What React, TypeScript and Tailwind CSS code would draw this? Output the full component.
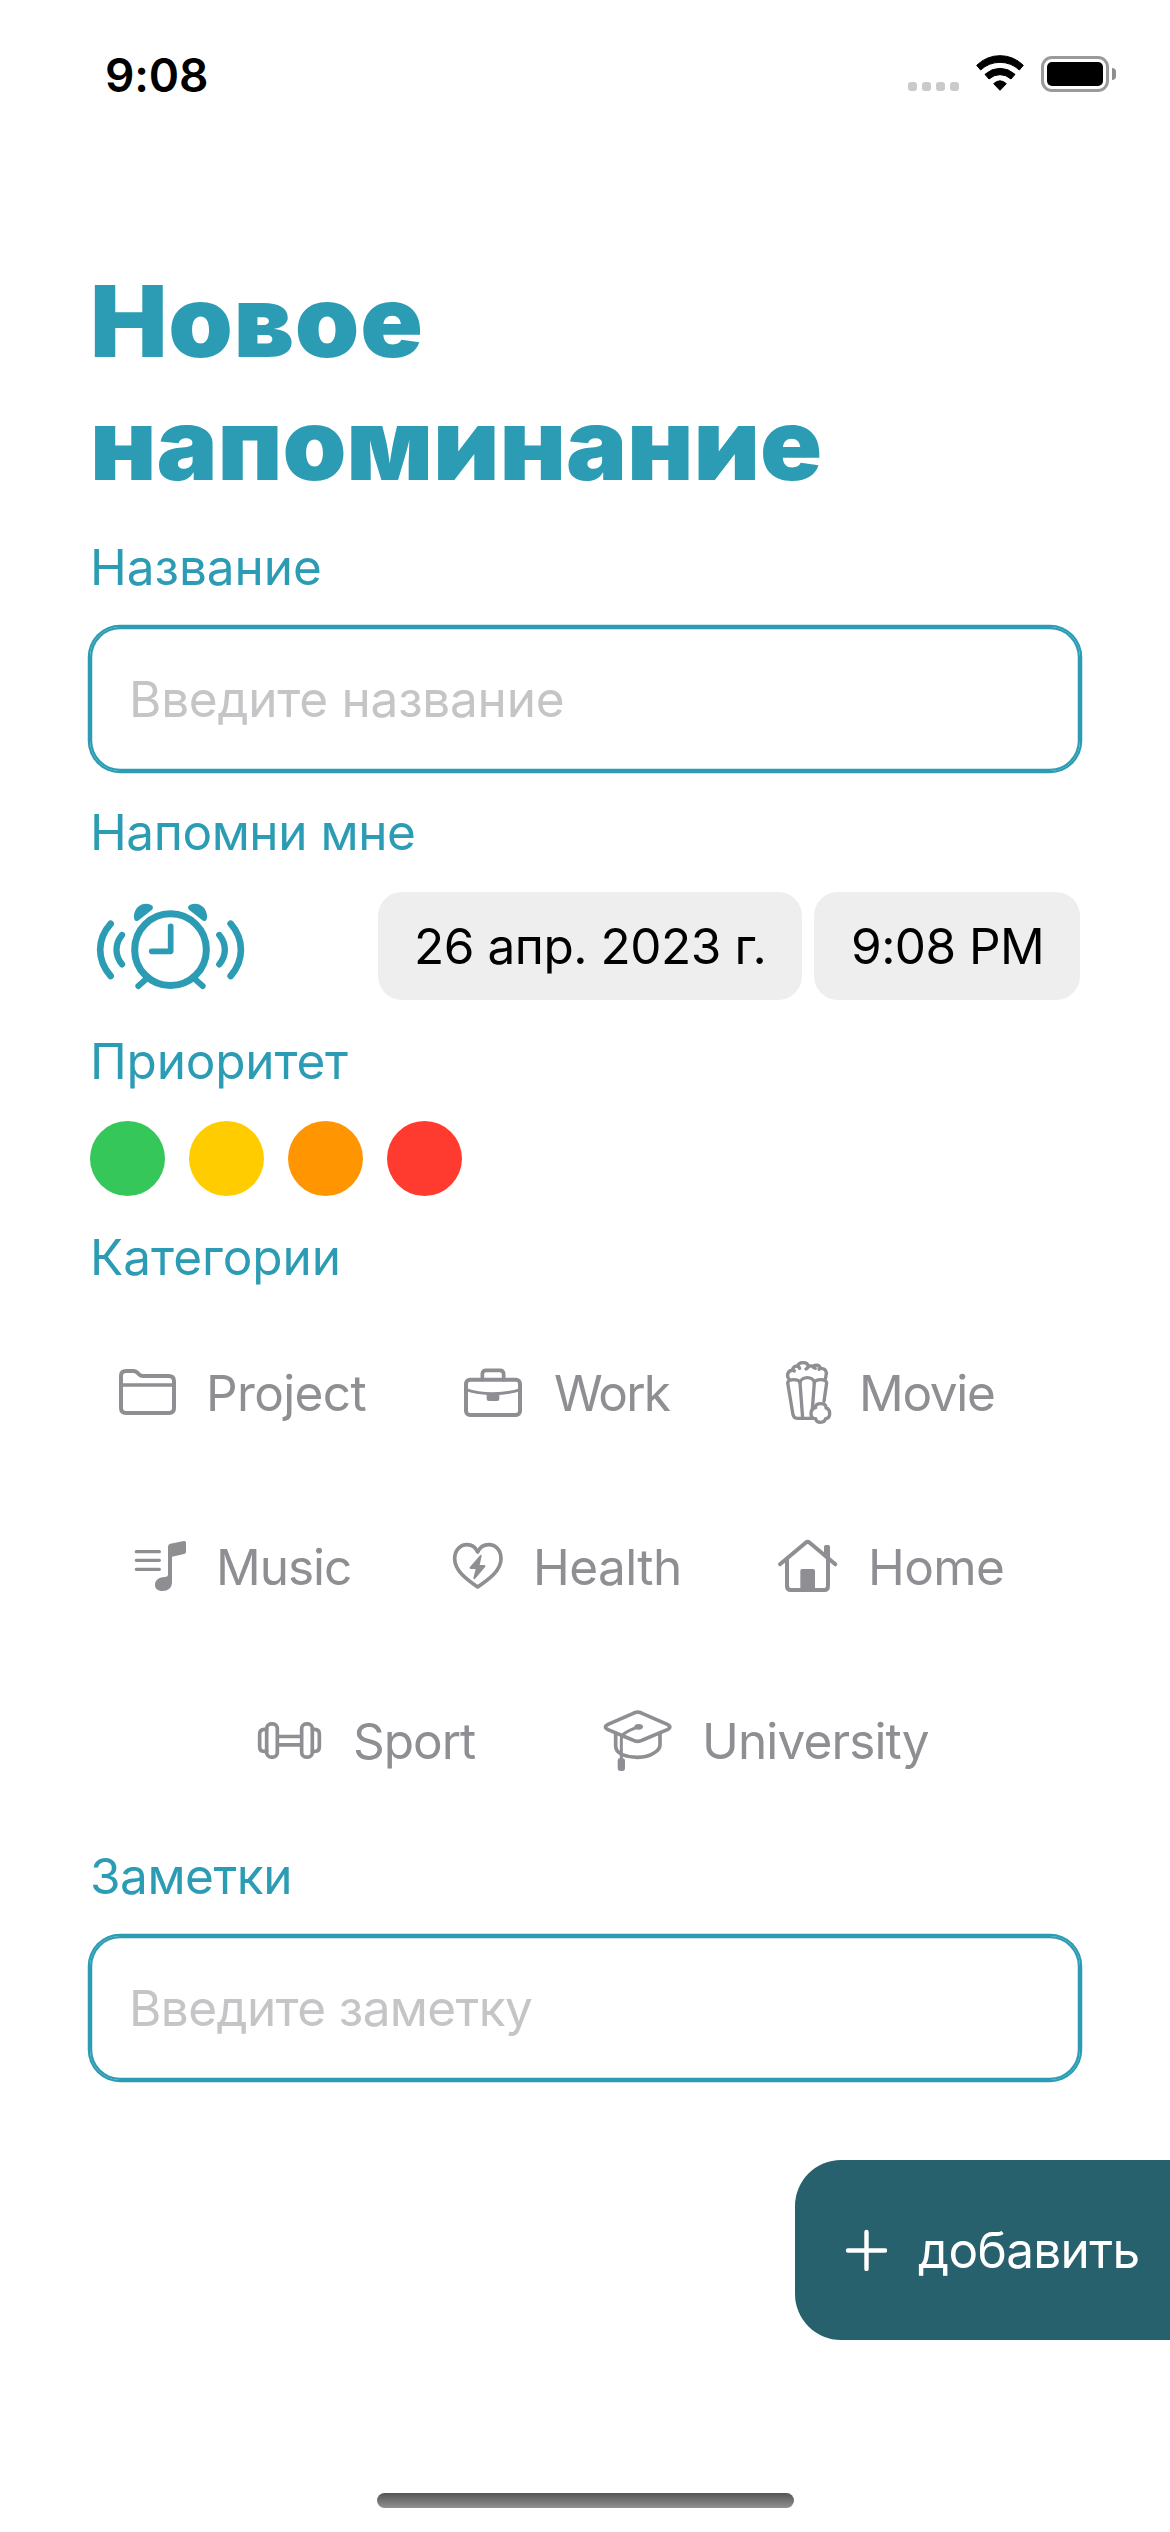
import React from "react";

const text = "text-[49.5px] leading-[60px] whitespace-nowrap";

function StatusBar() {
  return (
    <header className="flex h-[260px] items-start justify-between pt-[45px] pr-[54px] pl-[105px]">
      <span className="text-[46px] leading-[60px] font-semibold tracking-[-0.14px] text-black">9:08</span>
      <div className="flex pt-[10px]">
        <div className="mt-[27px] flex gap-[5px]">
          {[0, 1, 2, 3].map((i) => (
            <span key={i} className="size-[9px] rounded-[3px] bg-[#cacaca]" />
          ))}
        </div>
        <svg className="ml-[17px] h-[36px] w-[48px]" viewBox="285 75 144 108" fill="#000" stroke="#000" strokeWidth="3" strokeLinejoin="round">
          <path d="M287 106 Q317 77 357 77 Q397 77 427 106 L415 120 Q390 97 357 97 Q324 97 299 120Z" />
          <path d="M312 133 Q332 115 357 115 Q382 115 402 133 L390 147 Q375 134 357 134 Q339 134 324 147Z" />
          <path d="M338 161 Q357 144 376 161 L357 181Z" />
        </svg>
        <div className="mt-[1px] ml-[17px] flex h-[36px] w-[68px] rounded-[11px] border-[3px] border-[#9a9a9a] p-[3px]">
          <span className="flex-1 rounded-[5px] bg-black" />
        </div>
        <span className="mt-[13px] ml-[3px] h-[12px] w-[4px] rounded-r-[4px] bg-[#8f8f8f]" />
      </div>
    </header>
  );
}

function SectionLabel({ className, children }: { className: string; children: string }) {
  return <h2 className={`mt-[31px] mb-[30px] font-normal text-[#2b9cb3] ${text} ${className}`}>{children}</h2>;
}

function Field({ className, children }: { className: string; children: string }) {
  return (
    <div className="flex h-[144px] items-center rounded-[30px] pl-[39px] shadow-[0_0_0_2.25px_#2b9cb3,inset_0_0_0_2.25px_#2b9cb3]">
      <span className={`text-[#c5c5c7] ${text} ${className}`}>{children}</span>
    </div>
  );
}

function AlarmIcon() {
  return (
    <svg className="h-[108px] w-[160px]" viewBox="30 36 480 324" fill="none" stroke="#2b9cb3" strokeLinecap="round" strokeLinejoin="round">
      <circle cx="271.5" cy="209" r="107.5" strokeWidth="21" />
      <path d="M272 139 V214 H215" strokeWidth="17" />
      <path d="M198 298 L175 318 M345 298 L368 318" strokeWidth="18" />
      <path d="M126 165 C104 192 104 226 126 253 M418 165 C440 192 440 226 418 253" strokeWidth="19" />
      <path d="M92 131 C50 178 50 240 92 288 M452 131 C493 178 493 240 452 288" strokeWidth="20" />
      <g fill="#2b9cb3" stroke="none">
        <path d="M170 123 Q161 123 162 108 C163 85 180 71 198 71 C208 71 214 74 218 79 Q221 84 216 89 L178 119 Q174 123 170 123Z" />
        <path d="M373 123 Q382 123 381 108 C380 85 363 71 345 71 C335 71 329 74 325 79 Q322 84 327 89 L365 119 Q369 123 373 123Z" />
      </g>
    </svg>
  );
}

function Icon({ viewBox, children }: { viewBox: string; children: React.ReactNode }) {
  return (
    <svg className="size-[84px] shrink-0" viewBox={viewBox} fill="none" stroke="#8e8e93" strokeWidth="11" strokeLinecap="round" strokeLinejoin="round">
      {children}
    </svg>
  );
}

const fill = { fill: "#8e8e93", stroke: "none" };

const folder = (
  <Icon viewBox="48 63 252 252">
    <path d="M93 138 Q93 123 108 123 H130 Q137 123 142 128 L147 133 Q152 138 159 138 H236 Q252 138 252 154 V234 Q252 249 237 249 H108 Q93 249 93 234Z" strokeWidth="12" />
    <path d="M93 165 H252" />
  </Icon>
);

const briefcase = (
  <Icon viewBox="1092 63 252 252">
    <rect x="1128" y="149" width="162" height="106" rx="12" strokeWidth="12" />
    <path d="M1177 149 V133 Q1177 121 1189 121 H1229 Q1241 121 1241 133 V149" />
    <path d="M1128 179 Q1162 191 1209 191 Q1256 191 1290 179" strokeWidth="9" />
    <path d="M1190 192 H1228 V206 Q1228 213 1221 213 H1197 Q1190 213 1190 206Z" {...fill} />
  </Icon>
);

const popcorn = (
  <Icon viewBox="597 63 252 252">
    <g strokeWidth="10">
      <path d="M687 147 C679 138 682 122 698 120 C698 112 705 107 713 109 C715 100 722 98 729 98 C737 98 744 102 745 110 C751 107 757 108 759 110 C764 103 779 104 781 115 C796 114 802 126 798 136 Q798 143 795 148" />
      <path d="M698 120 L703 123 M713 109 Q718 110 719 115 M745 110 Q743 115 738 117 M759 110 Q761 115 766 115 M781 115 L777 118" />
      <path d="M756 265 H711 Q702 265 699 254 L683 158 C687 146 715 146 720 158 C724 138 760 138 763 158 C768 146 796 146 800 158 L792 214" />
      <path d="M720 158 L728 265 M763 158 L757 238" />
      <path d="M767 233 C765 224 772 221 782 221 C792 221 799 225 798 234 C807 236 809 243 809 251 C809 260 804 265 797 266 C795 273 790 277 782 277 C773 277 768 273 767 266 C758 266 753 260 753 251 C753 242 758 235 767 233Z" />
    </g>
  </Icon>
);

const music = (
  <Icon viewBox="78 585 252 252">
    <path d="M139 665 H208 M139 691 H208 M139 718 H208" strokeWidth="10" />
    <path d="M234 650 Q234 642 241 641 L282 633 Q288 632 288 638 V665 Q288 671 282 672 L246 680 V756 C246 774 234 783 217 783 C203 783 195 776 195 765 C195 752 204 744 219 742 L229 740 Q234 739 234 734Z" {...fill} />
  </Icon>
);

const heart = (
  <Icon viewBox="1029 585 252 252">
    <path d="M1163 771 C1130 748 1094 722 1094 686 C1094 661 1111 644 1131 644 C1146 644 1157 653 1163 666 C1169 653 1180 644 1196 644 C1217 644 1233 661 1233 686 C1233 722 1196 748 1163 771Z" />
    <path d="M1171 675 L1139 712 Q1138 717 1142 717 H1157 L1150 744 Q1151 749 1155 747 L1186 710 Q1187 705 1183 705 H1169 L1175 678 Q1174 673 1171 675Z" {...fill} />
  </Icon>
);

const home = (
  <Icon viewBox="624 585 252 252">
    <path d="M660 703 L737 638 Q743 633 749 638 L826 703" strokeWidth="12" />
    <path d="M681 688 V768 Q681 780 693 780 H793 Q804 780 804 768 V688" strokeWidth="12" />
    <path d="M721 782 V722 Q721 717 726 717 H760 Q765 717 765 722 V782Z" {...fill} />
    <path d="M792 678 V650 Q792 645 797 645 H805 Q810 645 810 650 V694Z" {...fill} />
  </Icon>
);

const dumbbell = (
  <Icon viewBox="69 57 252 252">
    <rect x="110" y="131.5" width="32" height="100" rx="14" />
    <rect x="215" y="131.5" width="32" height="100" rx="14" />
    <path d="M110 148 H103 Q89 148 89 162 V200 Q89 214 103 214 H110" />
    <path d="M247 148 H254 Q268 148 268 162 V200 Q268 214 254 214 H247" />
    <path d="M144 169.5 H213 M144 194.5 H213" strokeLinecap="butt" />
  </Icon>
);

const cap = (
  <Icon viewBox="1116 57 252 252">
    <path d="M1208 101 Q1223 92 1238 101 L1312 133 Q1327 141 1312 149 L1238 180 Q1223 188 1208 180 L1134 149 Q1119 141 1134 133Z" />
    <path d="M1157 160 V198 Q1157 215 1177 224 Q1197 232 1223 232 Q1252 232 1272 219 Q1290 208 1290 194 V160" />
    <path d="M1222 142 Q1195 151 1181 162 Q1174 167 1174 177 V240" strokeWidth="9" />
    <ellipse cx="1226" cy="140.5" rx="13" ry="8.5" {...fill} />
    <rect x="1163" y="234" width="22" height="39" rx="9" {...fill} />
  </Icon>
);

function Category({ icon, label, className }: { icon: React.ReactNode; label: string; className: string }) {
  return (
    <div className={`flex shrink-0 items-center gap-4 text-[#8e8e93] ${text} ${className}`}>
      {icon}
      <span>{label}</span>
    </div>
  );
}

export default function App() {
  return (
    <div
      className="flex h-[2532px] w-[1170px] flex-col overflow-hidden bg-white"
      style={{ fontFamily: 'Inter, "Liberation Sans", sans-serif' }}
    >
      <StatusBar />
      <main className="flex flex-col px-[90px]">
        <h1 className="flex flex-col text-[99px] leading-[123px] font-black text-[#2b9cb3]">
          <span className="origin-left scale-x-[1.045] tracking-[0.6px]">Новое</span>
          <span className="origin-left scale-x-[1.035] tracking-[-0.1px]">напоминание</span>
        </h1>

        <SectionLabel className="tracking-[-0.05px]">Название</SectionLabel>
        <Field className="tracking-[-0.25px]">Введите название</Field>

        <SectionLabel className="tracking-[-0.43px]">Напомни мне</SectionLabel>
        <div className="flex h-[108px]">
          <AlarmIcon />
          <div className={`ml-auto flex w-[424px] items-center rounded-[24px] bg-[#eeeeef] pl-[36px] tracking-[-0.45px] text-black ${text}`}>
            26 апр. 2023 г.
          </div>
          <div className={`ml-[12px] flex w-[266px] items-center rounded-[24px] bg-[#eeeeef] pl-[37px] tracking-[-0.56px] text-black ${text}`}>
            9:08 PM
          </div>
        </div>

        <SectionLabel className="tracking-[-0.2px]">Приоритет</SectionLabel>
        <div className="flex gap-6">
          <span className="size-[75px] rounded-full bg-[#35c759]" />
          <span className="size-[75px] rounded-full bg-[#ffcc00]" />
          <span className="size-[75px] rounded-full bg-[#ff9500]" />
          <span className="size-[75px] rounded-full bg-[#ff3b30]" />
        </div>

        <SectionLabel className="tracking-[-0.05px]">Категории</SectionLabel>
        <div className="mt-[34px] flex flex-col gap-[90px]">
          <div className="flex pl-[16px]">
            <Category icon={folder} label="Project" className="w-[348px] tracking-[-0.62px]" />
            <Category icon={briefcase} label="Work" className="w-[305px] tracking-[-1.9px]" />
            <Category icon={popcorn} label="Movie" className="tracking-[-1.3px]" />
          </div>
          <div className="flex pl-[26px]">
            <Category icon={music} label="Music" className="w-[317px] tracking-[-1.02px]" />
            <Category icon={heart} label="Health" className="w-[335px] tracking-[-0.57px]" />
            <Category icon={home} label="Home" className="tracking-[-0.61px]" />
          </div>
          <div className="flex pl-[163px]">
            <Category icon={dumbbell} label="Sport" className="w-[349px] tracking-[-1.04px]" />
            <Category icon={cap} label="University" className="tracking-[-0.88px]" />
          </div>
        </div>

        <div className="mt-[32px]">
          <SectionLabel className="tracking-[-0.47px]">Заметки</SectionLabel>
        </div>
        <Field className="tracking-[-0.6px]">Введите заметку</Field>
      </main>

      <button className="mt-[80px] flex h-[180px] w-[375px] shrink-0 items-center self-end rounded-l-[46px] bg-[#27616d] text-white">
        <svg className="ml-[50px] size-[42px]" viewBox="0 0 42 42" stroke="#fff" strokeWidth="4.4" strokeLinecap="round">
          <path d="M21.5 3 V40 M3 21.5 H40" />
        </svg>
        <span className={`ml-[31px] tracking-[-0.65px] ${text}`}>добавить</span>
      </button>

      <div className="mt-[153px] h-[15px] w-[417px] shrink-0 self-center rounded-full bg-linear-to-b from-[#555555] to-[#929292]" />
    </div>
  );
}
